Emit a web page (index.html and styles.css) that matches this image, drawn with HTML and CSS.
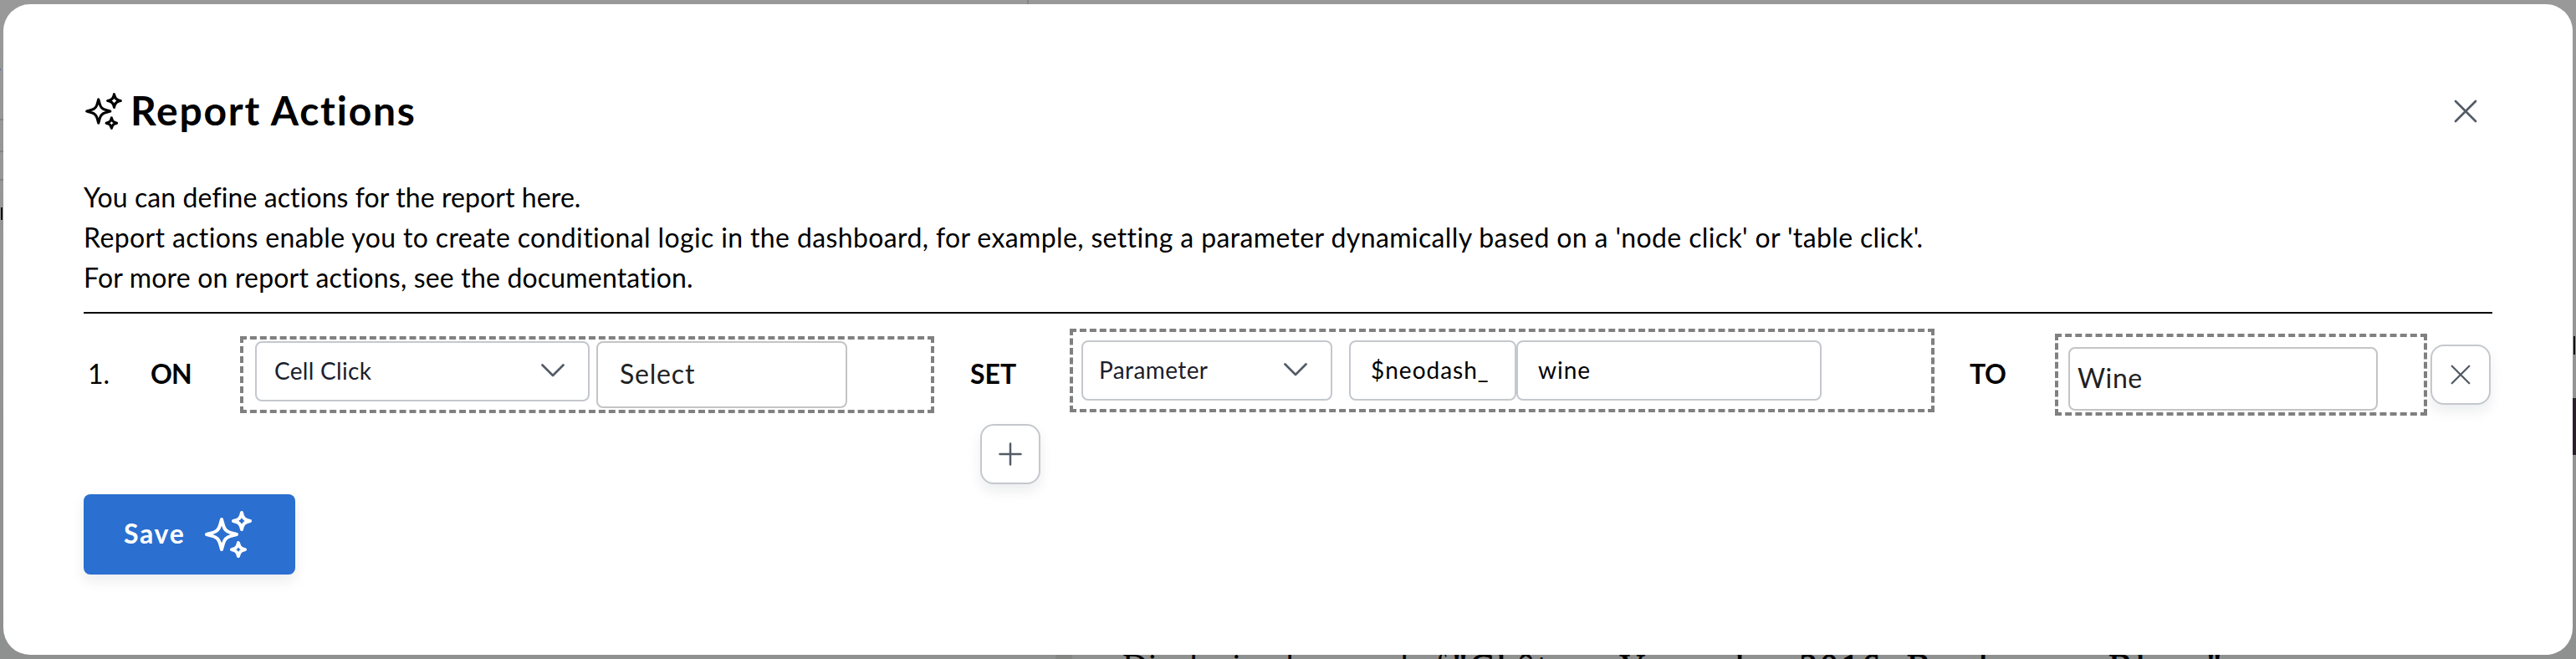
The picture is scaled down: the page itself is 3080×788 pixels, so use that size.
FILE: index.html
```html
<!DOCTYPE html>
<html lang="en">
<head>
<meta charset="utf-8">
<title>Report Actions</title>
<link rel="stylesheet" href="styles.css">
</head>
<body>
<svg class="defs" width="0" height="0">
  <symbol id="sparkles" viewBox="0 0 24 24">
    <path fill="none" stroke="currentColor" stroke-width="1.5" stroke-linecap="round" stroke-linejoin="round" d="M9.8 15.9 9 18.75l-.8-2.85a4.5 4.5 0 0 0-3.1-3.1L2.25 12l2.85-.8a4.5 4.5 0 0 0 3.1-3.1L9 5.25l.8 2.85a4.5 4.5 0 0 0 3.1 3.1l2.85.8-2.85.8a4.5 4.5 0 0 0-3.1 3.1ZM18.26 8.7 18 9.75l-.26-1.05a3.4 3.4 0 0 0-2.45-2.44L14.25 6l1.04-.26a3.4 3.4 0 0 0 2.45-2.45L18 2.25l.26 1.04a3.4 3.4 0 0 0 2.45 2.45L21.75 6l-1.04.26a3.4 3.4 0 0 0-2.45 2.44ZM16.9 20.6l-.4 1.15-.4-1.15a2.25 2.25 0 0 0-1.4-1.4l-1.2-.4 1.2-.4a2.25 2.25 0 0 0 1.4-1.4l.4-1.2.4 1.2a2.25 2.25 0 0 0 1.4 1.4l1.2.4-1.2.4a2.25 2.25 0 0 0-1.4 1.4Z"/>
  </symbol>
  <symbol id="cross" viewBox="0 0 28 28">
    <path fill="none" stroke="currentColor" stroke-width="2.7" stroke-linecap="round" d="M2 2 26 26M26 2 2 26"/>
  </symbol>
  <symbol id="plus" viewBox="0 0 28 28">
    <path fill="none" stroke="currentColor" stroke-width="2.5" stroke-linecap="round" d="M14 1.5v25M1.5 14h25"/>
  </symbol>
  <symbol id="chevron" viewBox="0 0 28 16">
    <path fill="none" stroke="currentColor" stroke-width="2.7" stroke-linecap="round" stroke-linejoin="round" d="M1.5 1.5 14 14 26.5 1.5"/>
  </symbol>
</svg>
<div class="page">
  <span class="behind behind-blue"></span>
  <span class="behind behind-line line-a"></span>
  <span class="behind behind-line line-b"></span>
  <span class="behind behind-line line-c"></span>
  <span class="behind behind-ink ink-left"></span>
  <span class="behind behind-ink ink-right"></span>
  <span class="behind behind-dark"></span>
  <span class="behind behind-gutter-top"></span>
  <span class="behind behind-gutter"></span>
  <span class="behind behind-title">Displaying keyword of</span>
  <span class="behind behind-title behind-name">"Château Versaulan 2016, Bordeaux - Blanc"</span>
</div>
<main class="modal">
  <header class="head">
    <svg class="head-icon"><use href="#sparkles"/></svg>
    <h1 class="title">Report Actions</h1>
    <svg class="close"><use href="#cross"/></svg>
  </header>
  <div class="intro">
    <p class="intro-first">You can define actions for the report here.</p>
    <p class="intro-main">Report actions enable you to create conditional logic in the dashboard, for example, setting a parameter dynamically based on a 'node click' or 'table click'.</p>
    <p class="intro-last">For more on report actions, see the documentation.</p>
  </div>
  <section class="rule">
    <span class="num">1.</span>
    <b class="kw kw-on">ON</b>
    <div class="zone zone-on">
      <div class="field select cell">Cell Click<svg class="chev"><use href="#chevron"/></svg></div>
      <div class="field mui pick">Select</div>
    </div>
    <b class="kw kw-set">SET</b>
    <div class="zone zone-set">
      <div class="field select param">Parameter<svg class="chev"><use href="#chevron"/></svg></div>
      <div class="field prefix">$neodash_</div>
      <div class="field name">wine</div>
    </div>
    <b class="kw kw-to">TO</b>
    <div class="zone zone-to">
      <div class="field mui value">Wine</div>
    </div>
    <div class="btn remove"><svg class="x"><use href="#cross"/></svg></div>
  </section>
  <div class="btn add"><svg class="p"><use href="#plus"/></svg></div>
  <div class="save"><span class="save-label">Save</span><svg class="save-icon"><use href="#sparkles"/></svg></div>
</main>
</body>
</html>
```
FILE: styles.css
```css
* { box-sizing: border-box; }
body {
  margin: 0;
  width: 3080px;
  height: 788px;
  padding: 5px 4px;
  overflow: hidden;
  position: relative;
  background: #969896;
  color: #000;
  font: 32px/48px Lato, sans-serif;
  font-variant-ligatures: none;
}
.defs { position: absolute; }
svg { display: block; flex: none; overflow: visible; }
.page { position: absolute; inset: 0; overflow: hidden; background: linear-gradient(#999, #8f9190); }
.behind { position: absolute; }
.behind-line { left: 0; width: 4px; height: 2px; background: #828382; }
.behind-blue { left: 0; top: 82px; width: 1px; height: 2px; background: #5b6f9e; }
.line-a { top: 142px; }
.line-b { top: 180px; }
.line-c { top: 214px; }
.behind-ink { width: 2px; background: #111; }
.ink-left { left: 1px; top: 248px; height: 15px; }
.ink-right { left: 3077px; top: 402px; height: 22px; }
.behind-dark { left: 3076px; top: 476px; width: 4px; height: 68px; background: #2b1f2d; }
.behind-gutter-top { left: 1228px; top: 0; width: 2px; height: 5px; background: #858585; }
.behind-gutter { left: 1262px; top: 783px; width: 20px; height: 5px; background: #838683; }
.behind-title { left: 1342px; top: 773px; font-family: "Liberation Serif", serif; font-size: 42px; white-space: nowrap; }
.behind-name { left: 1737px; letter-spacing: 3.9px; -webkit-text-stroke: 1px #000; }
.modal {
  position: relative;
  width: 3072px;
  height: 778px;
  padding: 96px 96px 0;
  border-radius: 32px;
  background: #fff;
  white-space: nowrap;
}
.head { display: flex; align-items: center; height: 64px; }
.head-icon { width: 50px; height: 50px; margin-left: -1px; }
.title { margin: -2px 0 0 7px; font-size: 48px; line-height: 64px; font-weight: 700; letter-spacing: 1.75px; }
.close { width: 28px; height: 28px; margin: 0 18px 0 auto; color: #535b66; }
.intro { height: 208px; padding-top: 45px; border-bottom: 2px solid #000; margin-top: 2px; margin-bottom: 18px; }
.intro p { margin: 0; }
.intro-first { letter-spacing: .09px; }
.intro-main { letter-spacing: .37px; }
.intro-last { letter-spacing: .18px; }
.rule { display: flex; align-items: flex-start; height: 114px; }
.num { width: 80px; padding: 30px 0 0 5px; }
.kw { font-weight: 700; padding-top: 30px; }
.kw-on { width: 107px; letter-spacing: -.8px; }
.kw-set { width: 119px; }
.kw-to { width: 102px; letter-spacing: -.5px; }
.zone { display: flex; border: 4px dashed #808080; flex: none; }
.zone-on { width: 830px; height: 92px; margin: 9px 43px 0 0; padding: 2px 0 0 14px; gap: 8px; }
.zone-set { width: 1034px; height: 100px; margin-right: 42px; padding: 10px 0 0 10px; }
.zone-to { width: 445px; height: 98px; margin: 6px 4px 0 0; padding: 12px 0 0 12px; }
.field {
  flex: none;
  display: flex;
  align-items: center;
  height: 72px;
  padding: 0 0 2px 24px;
  border: 2px solid #c4c8cd;
  border-radius: 8px;
  font-size: 28px;
}
.select { color: #1a202c; justify-content: space-between; padding: 0 28px 2px 21px; }
.mui { border-color: #c4c4c4; color: #212121; font-size: 32px; }
.chev { width: 28px; height: 16px; color: #535b66; }
.cell { width: 400px; letter-spacing: .3px; }
.pick { width: 300px; height: 80px; padding-left: 26px; letter-spacing: .8px; }
.param { width: 300px; margin-right: 20px; padding-left: 19px; letter-spacing: .4px; }
.prefix { width: 200px; letter-spacing: 1px; }
.name { width: 365px; letter-spacing: 1px; }
.value { width: 370px; height: 76px; padding-left: 9px; letter-spacing: .6px; }
.btn {
  width: 72px;
  height: 72px;
  flex: none;
  display: flex;
  align-items: center;
  justify-content: center;
  border: 2px solid #c4c8cd;
  border-radius: 16px;
  background: #fff;
  color: #535b66;
  box-shadow: 0 8px 16px rgba(12, 26, 37, .08);
}
.remove { margin-top: 19px; }
.x { width: 24px; height: 24px; }
.p { width: 28px; height: 28px; }
.add { margin-left: 1072px; }
.save {
  display: flex;
  align-items: center;
  width: 253px;
  height: 96px;
  margin-top: 12px;
  padding-left: 48px;
  border-radius: 8px;
  background: #2b6fd0;
  color: #fff;
  font-weight: 700;
  box-shadow: 0 8px 16px rgba(12, 26, 37, .08);
}
.save-label { width: 93px; padding-bottom: 2px; letter-spacing: 1.7px; }
.save-icon { width: 64px; height: 64px; }
```
